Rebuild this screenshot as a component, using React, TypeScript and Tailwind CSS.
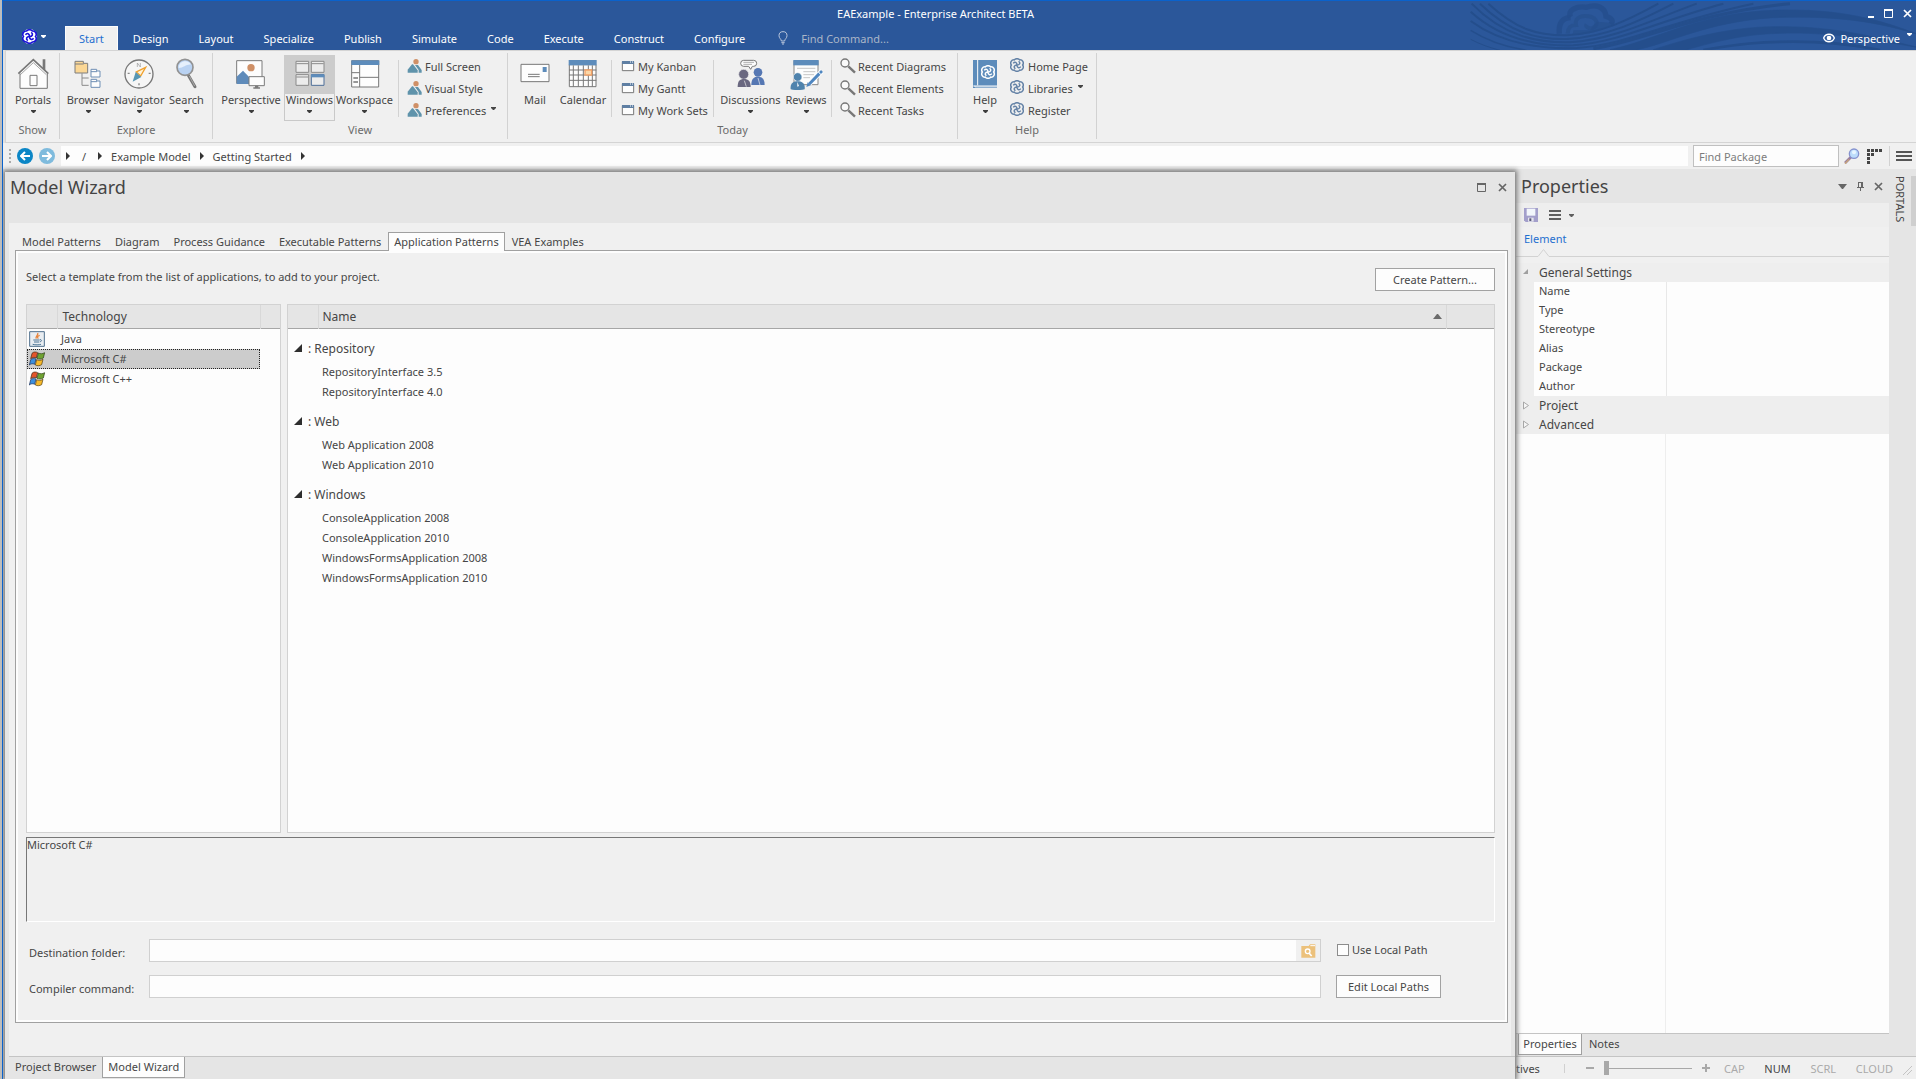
import React from "react";
import clsx from "clsx";

type IconProps = { className?: string };

/* ---------- icons ---------- */

const Caret = ({ className }: IconProps) => (
  <svg viewBox="0 0 5 3" className={clsx("w-[5px] h-[3px]", className)}>
    <path d="M0 0h5v1L3 3H2L0 1z" fill="currentColor" />
  </svg>
);

const Swirl = ({ className }: IconProps) => (
  <svg viewBox="0 0 26 26" className={className} fill="none" stroke="currentColor" strokeWidth="2.800">
    <path d="M8 3.500a6 5 0 0 1 10 0a6 6 0 0 1 5.500 9.500a6 6 0 0 1-5.500 9.500a6 5 0 0 1-10 0a6 6 0 0 1-5.500-9.500a6 6 0 0 1 5.500-9.500z" />
    <path d="M6 10c3-4 7-2 7 3c0 5 4 7 7 3M16 6c4 3 2 7-3 7c-5 0-7 4-3 7" />
  </svg>
);

const HouseIcon = () => (
  <svg viewBox="0 0 96 96" className="w-8 h-8">
    <path d="M9 45L48 10l39 35v47H9z" fill="#fdfdfd" />
    <path d="M77 4h8v36l-8-8z" fill="#777" />
    <path d="M9 46v45h82V46" fill="none" stroke="#777" strokeWidth="3" />
    <path d="M4 47L49 5l45 42" fill="none" stroke="#777" strokeWidth="5" />
    <path d="M10 50L49 14l39 36" fill="none" stroke="#777" strokeWidth="2" />
    <path d="M39 52h21v31H39z" fill="none" stroke="#777" strokeWidth="3" />
  </svg>
);

const BrowserIcon = () => (
  <svg viewBox="0 0 96 96" className="w-8 h-8">
    <path d="M30 46v36h20M30 60h20" fill="none" stroke="#8a8a8a" strokeWidth="3" />
    <path d="M9 10h25v6h13v29H9z" fill="#fbd795" stroke="#7d7d7d" strokeWidth="3" />
    <path d="M9 18h26" stroke="#7d7d7d" strokeWidth="3" />
    <path d="M57 34h17v5h10v18H57zM57 64h17v5h10v19H57z" fill="#fdfdfd" stroke="#6f8fb5" strokeWidth="3" />
    <path d="M57 41h18M57 71h18" stroke="#6f8fb5" strokeWidth="3" />
  </svg>
);

const CompassIcon = () => (
  <svg viewBox="0 0 96 96" className="w-8 h-8">
    <circle cx="48" cy="48" r="42" fill="#f6f6f6" stroke="#777" strokeWidth="4" />
    <path d="M43 27V15l9 12V15" fill="none" stroke="#999" strokeWidth="2" />
    <path d="M48 76v6M14 46h6M77 46h6" stroke="#888" strokeWidth="4" />
    <path d="M68 28L40 42l13 12z" fill="#fff3d8" stroke="#f0a02c" strokeWidth="4" />
    <path d="M38 42l17 15-26 14z" fill="#5897b4" />
  </svg>
);

const SearchIcon = () => (
  <svg viewBox="0 0 96 96" className="w-8 h-8">
    <path d="M52 52l20 34" stroke="#777" strokeWidth="9" strokeLinecap="round" />
    <path d="M55 54l16 30" stroke="#aaa" strokeWidth="3" />
    <circle cx="42" cy="28" r="24" fill="#b9d2f2" stroke="#929292" strokeWidth="5" />
    <path d="M23 30c0-14 10-20 20-20c8 0 14 4 17 10c-14-2-22 10-37 10z" fill="#e6f0fc" />
  </svg>
);

const PerspectiveIcon = () => (
  <svg viewBox="0 0 96 96" className="w-8 h-8">
    <path d="M5 8h76v68H5z" fill="#fdfdfd" stroke="#7b7b7b" strokeWidth="3" />
    <circle cx="48" cy="29" r="11" fill="#cf9067" />
    <path d="M5 56l19-18 19 20v20H5z" fill="#5f8bba" />
    <path d="M42 56h46v27H42z" fill="#fdfdfd" stroke="#7b7b7b" strokeWidth="3" />
    <path d="M60 83h10v5h5v4H55v-4h5z" fill="#7b7b7b" />
  </svg>
);

const WindowsIcon = () => (
  <svg viewBox="0 0 96 96" className="w-8 h-8">
    <path d="M6 10h38v33H6zM52 10h38v33H52zM6 50h38v32H6z" fill="#ececec" stroke="#8a8a8a" strokeWidth="3" />
    <path d="M7 17h36M53 17h36M7 57h36" stroke="#8a8a8a" strokeWidth="3" />
    <path d="M52 50h38v32H52z" fill="#ececec" stroke="#4f6f99" strokeWidth="3" />
    <path d="M51 49h40v9H51z" fill="#5d8cbb" />
  </svg>
);

const WorkspaceIcon = () => (
  <svg viewBox="0 0 96 96" className="w-8 h-8">
    <path d="M8 8h81v79H8z" fill="#fdfdfd" stroke="#777" strokeWidth="3" />
    <path d="M7 7h84v14H7z" fill="#5d8cbb" />
    <path d="M32 21v66M32 58h57M8 44h24" stroke="#777" strokeWidth="3" />
    <path d="M13 60h14M13 72h14" stroke="#777" strokeWidth="4" />
  </svg>
);

const MailIcon = () => (
  <svg viewBox="0 0 96 96" className="w-8 h-8">
    <path d="M6 19h84v52H6z" fill="#fdfdfd" stroke="#777" strokeWidth="3" />
    <path d="M71 27h12v15H71z" fill="#5d8cbb" />
    <path d="M27 49h35M27 56h35" stroke="#777" strokeWidth="3" />
  </svg>
);

const CalendarIcon = () => (
  <svg viewBox="0 0 96 96" className="w-8 h-8">
    <path d="M7 20h80v66H7z" fill="#fdfdfd" stroke="#777" strokeWidth="3" />
    <path d="M5 6h84v16H5z" fill="#5d8cbb" />
    <path d="M19 22v64M34 22v64M49 22v64M64 22v64M76 22v64M6 36h82M6 51h82M6 67h82" stroke="#777" strokeWidth="3" />
    <path d="M54 36h20v15H54z" fill="#fad7a8" stroke="#f2a268" strokeWidth="4" />
  </svg>
);

const DiscussionsIcon = () => (
  <svg viewBox="0 0 96 96" className="w-8 h-8">
    <path d="M26 7h30q9 0 9 9t-9 9h-4l-5 9-6-9H26q-9 0-9-9t9-9z" fill="#fdfdfd" stroke="#777" strokeWidth="3" />
    <path d="M25 13h32M25 19h26" stroke="#888" strokeWidth="2" />
    <circle cx="69" cy="43" r="13" fill="#5577b3" />
    <path d="M49 81c0-20 8-25 20-25s20 6 20 25z" fill="#5577b3" />
    <circle cx="26" cy="49" r="15" fill="#6a6880" stroke="#f0f0f0" strokeWidth="2" />
    <path d="M8 87c0-18 6-24 19-24s20 6 20 24z" fill="#6a6880" />
    <path d="M28 68l6 18M69 60l6 21" stroke="#f0f0f0" strokeWidth="2" />
  </svg>
);

const ReviewsIcon = () => (
  <svg viewBox="0 0 108 96" className="w-9 h-8">
    <path d="M18 8h72v72H18z" fill="#fdfdfd" stroke="#888" strokeWidth="3" />
    <path d="M16 6h76v16H16z" fill="#5d8cbb" />
    <path d="M27 31h55M46 41h36M46 50h32M46 59h20" stroke="#aaa" strokeWidth="2" />
    <circle cx="29" cy="57" r="13" fill="#4f83ad" stroke="#fdfdfd" strokeWidth="2" />
    <path d="M8 94c-2-18 8-24 21-24s23 6 21 24c-12 3-31 3-42 0z" fill="#4f83ad" />
    <path d="M28 72l5 12-5 2z" fill="#fff" />
    <path d="M64 78l30-31M94 47l8-8" stroke="#fdfdfd" strokeWidth="14" />
    <path d="M64 78l30-31" stroke="#4f86c0" strokeWidth="9" />
    <path d="M96 45l6-6" stroke="#4f86c0" strokeWidth="8" />
    <path d="M59 73l9 9-13 5z" fill="#4f86c0" />
  </svg>
);

const HelpIcon = () => (
  <div className="relative w-6 h-8">
    <svg viewBox="0 0 72 96" className="w-6 h-8">
      <path d="M0 6h72v84H0z" fill="#5d8cbb" />
      <path d="M14 6v76M4 84h68" stroke="#fdfdfd" strokeWidth="3" fill="none" />
      <path d="M0 84h6v3h66" stroke="#fdfdfd" strokeWidth="2" fill="none" />
    </svg>
    <Swirl className="absolute left-2 top-[7px] size-[14px] text-white" />
  </div>
);

const SceneIcon = () => (
  <svg viewBox="0 0 48 48" className="w-4 h-4">
    <circle cx="27" cy="11" r="8" fill="#cf9067" />
    <path d="M2 44V35L15 19h3l14 18v7z" fill="#5f93ab" />
    <path d="M24 21h9l11 15v8h-9v-8z" fill="#5f93ab" />
  </svg>
);

const FrameIcon = () => (
  <svg viewBox="0 0 48 48" className="w-4 h-4">
    <path d="M7 11h34v27H7z" fill="#fdfdfd" stroke="#777" strokeWidth="3" />
    <path d="M6 9h36v9H6z" fill="#5f7fa3" />
    <path d="M30 12h3M36 12h3" stroke="#fff" strokeWidth="3" />
  </svg>
);

const LensIcon = () => (
  <svg viewBox="0 0 48 48" className="w-4 h-4">
    <circle cx="15" cy="15" r="12" fill="#fafafa" stroke="#777" strokeWidth="4" />
    <path d="M25 25l20 19" stroke="#777" strokeWidth="7" />
  </svg>
);

const SmallSwirl = () => <Swirl className="size-[14px] text-[#6482a6]" />;

const FlagIcon = () => (
  <svg viewBox="0 0 48 48" className="w-4 h-4">
    <path d="M9 7c5-5 11-5 17-2l-4 16c-6-3-11-2-17 2z" fill="#e2552b" stroke="#3c2414" strokeWidth="2" />
    <path d="M28 6c6 3 12 3 19-1l-4 16c-7 4-13 4-19 1z" fill="#6fa332" stroke="#2b3b12" strokeWidth="2" />
    <path d="M5 26c5-4 10-5 16-2l-4 16c-6-3-11-2-16 2z" fill="#3d8fdd" stroke="#1b2e55" strokeWidth="2" />
    <path d="M23 26c6 3 12 3 19-1l-4 16c-7 4-13 4-19 1z" fill="#f6b92b" stroke="#4d3a10" strokeWidth="2" />
  </svg>
);

const JavaIcon = () => (
  <svg viewBox="0 0 48 48" className="w-4 h-4">
    <path d="M2 2h44v44H2z" fill="#e9edf1" stroke="#4f6f8c" strokeWidth="3" />
    <path d="M26 6c4 7-9 9-4 17M32 13c-8 3-8 5-4 10" fill="none" stroke="#e8833a" strokeWidth="4" />
    <path d="M13 27h19M15 33h16M11 40c8 2 19 2 25 0M33 26c6-1 6 6 0 6" fill="none" stroke="#4d7595" strokeWidth="3" />
  </svg>
);

const CloseIcon = ({ className }: IconProps) => (
  <svg viewBox="0 0 9 9" className={clsx("size-[9px]", className)}>
    <path d="M1 1l7 7M8 1L1 8" stroke="currentColor" strokeWidth="1.700" />
  </svg>
);

const MaxIcon = ({ className }: IconProps) => (
  <svg viewBox="0 0 9 9" className={clsx("size-[9px]", className)}>
    <path d="M.5 1h8v7.500h-8z" fill="none" stroke="currentColor" />
    <path d="M0 1h9" stroke="currentColor" strokeWidth="2" />
  </svg>
);

const MenuIcon = ({ className }: IconProps) => (
  <svg viewBox="0 0 16 10" preserveAspectRatio="none" className={className}>
    <path d="M0 0h16v2H0zM0 4h16v2H0zM0 8h16v2H0z" fill="currentColor" />
  </svg>
);

const HeaderWaves = () => (
  <svg viewBox="0 0 1428 147" className="absolute right-0 top-0 w-[476px] h-[49px]" fill="none" stroke="#244e8c">
    <path d="M145 8C230 85 290 104 380 103C480 98 560 60 655 8" strokeWidth="6" />
    <path d="M120 8C210 95 290 116 380 114C500 108 600 60 700 8" strokeWidth="6" />
    <path d="M95 8C190 105 290 126 390 124C520 117 640 55 770 8" strokeWidth="6" />
    <path d="M92 32C180 112 290 136 400 133C540 124 670 55 850 8" strokeWidth="6" />
    <path d="M92 60C180 125 290 145 410 141C560 132 690 60 940 8" strokeWidth="6" />
    <path d="M92 88C150 125 210 140 260 148" strokeWidth="4" />
    <path d="M92 115C120 130 150 140 180 148" strokeWidth="3" />
    <path d="M460 143C600 125 760 35 1050 8" strokeWidth="9" />
    <path d="M510 146C640 120 780 35 1000 28C1200 20 1330 60 1428 98C1320 66 1200 42 1000 50C800 62 680 130 590 146z" fill="#244e8c" strokeWidth="2" />
    <path d="M640 146C780 100 900 76 1020 77C1180 76 1320 110 1428 138C1300 118 1180 92 1020 97C900 99 800 130 740 146z" fill="#244e8c" strokeWidth="2" />
    <path d="M790 147C900 128 960 122 1060 122C1180 122 1260 135 1320 147" strokeWidth="8" />
    <path d="M358 98C355 66 368 50 392 50" strokeWidth="16" opacity=".8" />
    <path d="M392 48C380 28 410 14 440 19C468 8 496 18 498 46C515 52 522 60 512 70" strokeWidth="16" opacity=".8" />
    <path d="M383 98C384 78 392 72 408 72C402 48 430 40 455 48C475 58 474 74 456 82C444 84 436 76 440 70" strokeWidth="12" opacity=".6" />
    <path d="M398 102C470 100 500 80 522 66L470 62L450 88H400z" fill="#244e8c" stroke="none" opacity=".6" />
  </svg>
);

/* ---------- ribbon ---------- */

type BigProps = {
  label: string;
  icon: React.ReactNode;
  width: string;
  arrow?: boolean;
  active?: boolean;
};

const BigButton = ({ label, icon, width, arrow = true, active }: BigProps) => (
  <button
    className={clsx(
      "h-[66px] flex flex-col items-center shrink-0 whitespace-nowrap",
      width,
      active && "shadow-[inset_0_0_0_1px_#c9c9c9]"
    )}
  >
    <span className={clsx("h-[39px] w-full pt-[3px] flex justify-center", active && "bg-[#cccccc]")}>
      {icon}
    </span>
    <span className="leading-[11px]">{label}</span>
    {arrow && <Caret className="mt-[5px] text-[#3c3c3c]" />}
  </button>
);

type SmallProps = { items: string[]; icon: React.ReactNode; arrowOn?: string; className?: string };

const SmallList = ({ items, icon, arrowOn, className }: SmallProps) => (
  <div className={clsx("flex flex-col shrink-0", className)}>
    {items.map((item) => (
      <button key={item} className="h-[22px] flex items-center whitespace-nowrap">
        <span className="w-[18px] h-4">{icon}</span>
        {item}
        {item === arrowOn && <Caret className="ml-[5px] mb-[3px]" />}
      </button>
    ))}
  </div>
);

const Divider = () => <div className="w-px h-[57px] mt-[5px] bg-[#d2d2d2] shrink-0" />;

type GroupProps = { title: string; width: string; pad?: string; children: React.ReactNode };

const Group = ({ title, width, pad, children }: GroupProps) => (
  <section className={clsx("border-r border-[#d2d2d2] pt-[2px] shrink-0", width)}>
    <div className={clsx("flex", pad)}>{children}</div>
    <h2 className="text-center leading-[18px] text-[#6a6a6a]">{title}</h2>
  </section>
);

const Ribbon = () => (
  <div className="flex bg-[#f0f0f0] border border-[#d4d4d4] border-r-0 pt-[2px] pb-[3px] h-[93px] ml-[2px] overflow-hidden">
    <Group title="Show" width="w-[54px]">
      <BigButton label="Portals" icon={<HouseIcon />} width="w-[54px]" />
    </Group>
    <Group title="Explore" width="w-[153px]" pad="pl-1">
      <BigButton label="Browser" icon={<BrowserIcon />} width="w-12" />
      <BigButton label="Navigator" icon={<CompassIcon />} width="w-[54px]" />
      <BigButton label="Search" icon={<SearchIcon />} width="w-[41px]" />
    </Group>
    <Group title="View" width="w-[295px]" pad="pl-[5px]">
      <BigButton label="Perspective" icon={<PerspectiveIcon />} width="w-[66px]" />
      <BigButton label="Windows" icon={<WindowsIcon />} width="w-[51px]" active />
      <BigButton label="Workspace" icon={<WorkspaceIcon />} width="w-[59px]" />
      <div className="w-1" />
      <Divider />
      <SmallList
        className="pl-2"
        items={["Full Screen", "Visual Style", "Preferences"]}
        icon={<SceneIcon />}
        arrowOn="Preferences"
      />
    </Group>
    <Group title="Today" width="w-[450px]" pad="pl-[5px]">
      <BigButton label="Mail" icon={<MailIcon />} width="w-11" arrow={false} />
      <BigButton label="Calendar" icon={<CalendarIcon />} width="w-[52px]" arrow={false} />
      <div className="w-[2px]" />
      <Divider />
      <SmallList className="pl-2 w-[101px]" items={["My Kanban", "My Gantt", "My Work Sets"]} icon={<FrameIcon />} />
      <Divider />
      <div className="w-[6px]" />
      <BigButton label="Discussions" icon={<DiscussionsIcon />} width="w-[61px]" />
      <BigButton label="Reviews" icon={<ReviewsIcon />} width="w-[50px]" />
      <Divider />
      <SmallList className="pl-2" items={["Recent Diagrams", "Recent Elements", "Recent Tasks"]} icon={<LensIcon />} />
    </Group>
    <Group title="Help" width="w-[139px]" pad="pl-[7px]">
      <BigButton label="Help" icon={<HelpIcon />} width="w-10" />
      <SmallList
        className="pl-[5px]"
        items={["Home Page", "Libraries", "Register"]}
        icon={<SmallSwirl />}
        arrowOn="Libraries"
      />
    </Group>
  </div>
);

/* ---------- header ---------- */

const menuTabs = ["Design", "Layout", "Specialize", "Publish", "Simulate", "Code", "Execute", "Construct", "Configure"];

const Header = () => (
  <header className="relative bg-[#2b579a] text-white h-[49px] overflow-hidden shrink-0">
    <HeaderWaves />
    <div className="relative h-[25px] flex items-center">
      <h1 className="flex-1 text-center">EAExample - Enterprise Architect BETA</h1>
      <div className="flex items-center gap-[10px] pr-1">
        <button aria-label="Minimize" className="w-[6px] h-[9px] border-b-2 border-white" />
        <button aria-label="Maximize">
          <MaxIcon />
        </button>
        <button aria-label="Close">
          <CloseIcon />
        </button>
      </div>
    </div>
    <nav className="relative h-6 flex items-center">
      <button aria-label="Application menu" className="flex items-center gap-1 pl-[19px] w-[62px] pb-[3px]">
        <span className="size-[15px] rounded-full bg-white text-[#1a12d8]">
          <Swirl className="size-[15px]" />
        </span>
        <Caret />
      </button>
      <button className="h-6 px-[13px] bg-[#f0f0f0] border border-b-0 border-[#fdfdfd] text-[#1f6fcf]">
        Start
      </button>
      {menuTabs.map((tab) => (
        <button key={tab} className="h-6 px-[15px]">
          {tab}
        </button>
      ))}
      <label className="flex items-center ml-[18px] flex-1">
        <svg viewBox="0 0 30 42" className="w-[10px] h-[14px]" fill="none" stroke="#b9c6dc" strokeWidth="3">
          <path d="M10 30c0-6-7-8-7-16a12 12 0 0 1 24 0c0 8-7 10-7 16zM10 35h10M12 39h6" />
        </svg>
        <input
          type="text"
          aria-label="Find Command"
          placeholder="Find Command..."
          className="ml-[13px] w-40 bg-transparent outline-none placeholder:text-[#aab6c8]"
        />
      </label>
      <button className="flex items-center h-6 pr-1">
        <svg viewBox="0 0 36 30" className="w-3 h-[10px]" fill="none" stroke="#fff" strokeWidth="4">
          <path d="M2 15C8 0 28 0 34 15C28 30 8 30 2 15z" />
          <circle cx="18" cy="15" r="5" fill="#fff" />
        </svg>
        <span className="ml-[5px]">Perspective</span>
        <Caret className="ml-[7px] mb-2" />
      </button>
    </nav>
  </header>
);

const Crumb = () => (
  <svg viewBox="0 0 4 8" className="w-1 h-2">
    <path d="M0 0l4 4-4 4z" fill="#333" />
  </svg>
);

const Arrow = ({ back, className }: { back?: boolean; className: string }) => (
  <button aria-label={back ? "Back" : "Forward"} className={clsx("size-4 rounded-full flex items-center justify-center", className)}>
    <svg viewBox="0 0 10 10" className="size-[10px]" fill="none" stroke="#fff" strokeWidth="2">
      <path d={back ? "M10 5H1M5 1L1 5l4 4" : "M0 5h9M5 1l4 4-4 4"} />
    </svg>
  </button>
);

const Breadcrumbs = () => (
  <div className="flex items-center h-[26px] bg-[#f0f0f0] pl-[6px] shrink-0">
    <div className="h-[14px] border-l-2 border-dotted border-[#aaa]" />
    <div className="flex gap-[6px] pl-[6px]">
      <Arrow back className="bg-[#0b86c6]" />
      <Arrow className="bg-[#7fbbdd]" />
    </div>
    <nav className="flex-1 h-5 ml-[6px] bg-[#fdfdfd] flex items-center gap-[9px] pl-[5px]">
      <Crumb />
      <a href="#root" className="px-[3px]">
        /
      </a>
      <Crumb />
      <a href="#example">Example Model</a>
      <Crumb />
      <a href="#started">Getting Started</a>
      <Crumb />
    </nav>
    <input
      type="text"
      aria-label="Find Package"
      placeholder="Find Package"
      className="ml-[5px] w-[146px] h-[22px] bg-[#fdfdfd] border border-[#c0c0c0] px-[5px] outline-none placeholder:text-[#7c7c7c]"
    />
    <button aria-label="Find" className="ml-[5px]">
      <svg viewBox="0 0 48 48" className="w-4 h-4">
        <path d="M3 45l18-18" stroke="#9a7fa0" strokeWidth="8" />
        <path d="M3 47l12-13" stroke="#c9a778" strokeWidth="4" />
        <circle cx="30" cy="17" r="14" fill="#bcdcfb" stroke="#8592cf" strokeWidth="4" />
        <circle cx="30" cy="13" r="6" fill="#e8f5ff" />
      </svg>
    </button>
    <button aria-label="Layout" className="ml-[7px]">
      <svg viewBox="0 0 15 15" className="size-[15px]" fill="#444">
        <path d="M0 0h3v3H0zM4 0h3v3H4zM8 0h3v3H8zM12 0h3v3h-3zM0 4h3v3H0zM4 4h3v3H4zM0 8h3v3H0zM0 12h3v3H0z" />
      </svg>
    </button>
    <div className="w-px h-5 bg-[#d2d2d2] ml-[7px] mr-[6px]" />
    <button aria-label="Menu" className="mr-1">
      <MenuIcon className="w-4 h-[10px] text-[#555]" />
    </button>
  </div>
);

/* ---------- wizard ---------- */

const wizardTabs = [
  "Model Patterns",
  "Diagram",
  "Process Guidance",
  "Executable Patterns",
  "Application Patterns",
  "VEA Examples",
];

const technologies = [
  { name: "Java", icon: <JavaIcon /> },
  { name: "Microsoft C#", icon: <FlagIcon />, selected: true },
  { name: "Microsoft C++", icon: <FlagIcon /> },
];

const patterns = [
  { group: "Repository", items: ["RepositoryInterface 3.5", "RepositoryInterface 4.0"] },
  { group: "Web", items: ["Web Application 2008", "Web Application 2010"] },
  {
    group: "Windows",
    items: [
      "ConsoleApplication 2008",
      "ConsoleApplication 2010",
      "WindowsFormsApplication 2008",
      "WindowsFormsApplication 2010",
    ],
  },
];

const TechnologyList = () => (
  <div className="w-[255px] shrink-0 bg-[#fdfdfd] border border-[#d2d2d2]">
    <table className="w-full table-fixed">
      <colgroup>
        <col className="w-[30px]" />
        <col className="w-[203px]" />
        <col />
      </colgroup>
      <thead>
        <tr className="h-[23px] bg-[#e5e5e5] border-b border-[#a6a6a6] text-left">
          <th className="border-r border-[#d8d8d8]" />
          <th className="border-r border-[#d8d8d8] pl-[5px] font-normal text-[12px]">Technology</th>
          <th />
        </tr>
      </thead>
      <tbody>
        {technologies.map((tech) => (
          <tr key={tech.name} className="h-5">
            <td colSpan={2} className="p-0">
              <div
                className={clsx(
                  "flex items-center border pl-px h-5",
                  tech.selected ? "bg-[#cccccc] border-dotted border-[#222]" : "border-transparent"
                )}
              >
                {tech.icon}
                <span className="pl-4">{tech.name}</span>
              </div>
            </td>
            <td />
          </tr>
        ))}
      </tbody>
    </table>
  </div>
);

const PatternList = () => (
  <div className="flex-1 bg-[#fdfdfd] border border-[#d2d2d2]">
    <table className="w-full table-fixed">
      <colgroup>
        <col className="w-[30px]" />
        <col />
        <col className="w-12" />
      </colgroup>
      <thead>
        <tr className="h-[23px] bg-[#e5e5e5] border-b border-[#a6a6a6] text-left">
          <th className="border-r border-[#d8d8d8]" />
          <th className="border-r border-[#d8d8d8] px-[4px] font-normal text-[12px]">
            <div className="flex items-center justify-between">
              Name
              <svg viewBox="0 0 9 5" className="w-[9px] h-[5px]">
                <path d="M0 5l4-5h1l4 5z" fill="#6b6b6b" />
              </svg>
            </div>
          </th>
          <th />
        </tr>
      </thead>
      {patterns.map(({ group, items }) => (
        <tbody key={group}>
          <tr className="h-[33px]">
            <th colSpan={3} className="font-normal text-left text-[12px] pt-[7px] pb-0 pl-[6px]">
              <div className="flex items-center">
                <svg viewBox="0 0 8 8" className="size-2 mr-[6px]">
                  <path d="M8 0v8H0z" fill="#2e2e2e" />
                </svg>
                : {group}
              </div>
            </th>
          </tr>
          {items.map((item) => (
            <tr key={item} className="h-5">
              <td colSpan={3} className="pl-[34px] py-0">
                {item}
              </td>
            </tr>
          ))}
        </tbody>
      ))}
    </table>
  </div>
);

const field = "h-[23px] bg-[#fdfdfd] border border-[#d0d0d0]";
const pushButton = "h-[23px] bg-[#fdfdfd] border border-[#a2a2a2] leading-[21px]";

const ApplicationPatterns = () => (
  <div className="flex-1 flex flex-col border border-[#a0a0a0] shadow-[inset_0_0_0_2px_#fdfdfd] pt-[17px] pl-[10px] pr-3 pb-6">
    <div className="flex items-start justify-between">
      <p className="leading-[18px]">Select a template from the list of applications, to add to your project.</p>
      <button className={clsx(pushButton, "w-[120px]")}>Create Pattern...</button>
    </div>
    <div className="flex-1 flex gap-[6px] mt-[13px]">
      <TechnologyList />
      <PatternList />
    </div>
    <div className="mt-1 h-[85px] border border-l-[#777] border-t-[#777] border-r-white border-b-white leading-[14px]">
      Microsoft C#
    </div>
    <div className="flex flex-col gap-[13px] mt-[17px]">
      <div className="flex">
        <label htmlFor="destination" className="w-[123px] pl-[3px] pt-[6px]">
          Destination <u className="underline-offset-2">f</u>older:
        </label>
        <div className={clsx(field, "flex-1 flex")}>
          <input id="destination" type="text" className="flex-1 px-1 outline-none" />
          <button aria-label="Browse" className="w-6 bg-[#f0f0f0] flex items-center justify-center">
            <svg viewBox="0 0 45 42" className="w-[15px] h-[14px]">
              <path d="M1 6h22l4-5h16v40H1z" fill="#ecc17b" />
              <path d="M28 5h14" stroke="#fff" strokeWidth="3" />
              <circle cx="20" cy="22" r="7" fill="none" stroke="#fff" strokeWidth="4" />
              <path d="M24 27l8 9" stroke="#fff" strokeWidth="5" />
            </svg>
          </button>
        </div>
        <label className="ml-4 w-[158px] h-[21px] flex items-center">
          <input type="checkbox" className="appearance-none size-3 bg-[#fdfdfd] border border-[#8c8c8c] mr-[3px]" />
          Use Local Path
        </label>
      </div>
      <div className="flex">
        <label htmlFor="compiler" className="w-[123px] pl-[3px] pt-[6px]">
          Compiler command:
        </label>
        <input id="compiler" type="text" className={clsx(field, "flex-1 px-1 outline-none")} />
        <div className="ml-[15px] w-[159px]">
          <button className={clsx(pushButton, "w-[105px]")}>Edit Local Paths</button>
        </div>
      </div>
    </div>
  </div>
);

const ModelWizard = () => (
  <main className="relative z-10 flex-1 min-w-0 flex flex-col bg-[#e5e5e5] ml-[2px] mr-px shadow-[0_0_5px_2px_#777]">
    <div className="h-[51px] flex justify-between items-start pl-[5px] pr-2">
      <h2 className="text-[18px] leading-[31px] text-[#444]">Model Wizard</h2>
      <div className="flex gap-3 pt-[11px] text-[#666]">
        <button aria-label="Maximize panel">
          <MaxIcon />
        </button>
        <button aria-label="Close panel">
          <CloseIcon />
        </button>
      </div>
    </div>
    <div className="flex-1 flex flex-col mx-1 px-[6px] pr-[3px] pt-[9px] pb-[33px] bg-[#f0f0f0]">
      <div className="flex h-[18px]">
        {wizardTabs.map((tab) => (
          <button
            key={tab}
            className={clsx(
              "h-[19px] pb-px",
              tab === "Application Patterns"
                ? "relative px-[5px] bg-[#fdfdfd] border border-b-0 border-[#a0a0a0]"
                : "px-[7px]"
            )}
          >
            {tab}
          </button>
        ))}
      </div>
      <ApplicationPatterns />
    </div>
    <div className="h-[23px] ml-1 flex border-t border-[#c4c4c4]">
      <button className="h-[21px] pb-[2px] px-[6px]">Project Browser</button>
      <button className="h-[21px] pb-px px-[5px] bg-[#fdfdfd] border border-t-0 border-[#a0a0a0]">Model Wizard</button>
    </div>
  </main>
);

/* ---------- properties ---------- */

const generalRows = ["Name", "Type", "Stereotype", "Alias", "Package", "Author"];

const Properties = () => (
  <aside className="w-[373px] flex flex-col bg-[#e5e5e5]">
    <div className="h-[34px] flex items-center justify-between pl-[5px] pr-[6px]">
      <h2 className="text-[18px] text-[#444]">Properties</h2>
      <div className="flex items-center gap-[10px] text-[#666]">
        <button aria-label="Options">
          <svg viewBox="0 0 9 5" className="w-[9px] h-[5px]">
            <path d="M0 0h9L5 5H4z" fill="currentColor" />
          </svg>
        </button>
        <button aria-label="Pin">
          <svg viewBox="0 0 7 9" className="w-[7px] h-[9px]" fill="none" stroke="currentColor">
            <path d="M1.500 0v5M1 .5h4M0 5.500h7M3.500 6v3" />
            <path d="M5 0v5" strokeWidth="2" />
          </svg>
        </button>
        <button aria-label="Close properties">
          <CloseIcon />
        </button>
      </div>
    </div>
    <div className="h-6 flex items-center gap-[11px] pl-2 bg-[#eeeeee]">
      <button aria-label="Save">
        <svg viewBox="0 0 42 42" className="size-[14px]">
          <path d="M0 0h42v42H5L0 37z" fill="#a39fcb" />
          <path d="M8 2h26v21H8z" fill="#f2f6fb" />
          <path d="M12 29h17v12H12z" fill="#e4e4ee" />
          <path d="M16 31h6v8h-6z" fill="#5a5a78" />
        </svg>
      </button>
      <button aria-label="View menu" className="flex items-center gap-2 text-[#5f5f5f]">
        <MenuIcon className="w-3 h-[10px]" />
        <Caret />
      </button>
    </div>
    <div className="h-9 bg-[#f0f0f0]">
      <a href="#element" className="block pl-2 leading-6 text-[#1f6fcf]">
        Element
      </a>
      <div className="flex items-end h-[6px]">
        <div className="w-[22px] border-b border-[#d2d2d2]" />
        <svg viewBox="0 0 11 8" className="w-[11px] h-2" fill="none" stroke="#d2d2d2">
          <path d="M0 7.500L5.500 .5L11 7.500" />
        </svg>
        <div className="flex-1 border-b border-[#d2d2d2]" />
      </div>
    </div>
    <div className="flex-1 flex flex-col bg-[#fdfdfd]">
      <table className="w-full table-fixed">
        <colgroup>
          <col className="w-[18px]" />
          <col className="w-[132px]" />
          <col />
        </colgroup>
        <tbody>
          <tr className="h-[19px] bg-[#eeeeee]">
            <td className="pt-0 pb-[2px] pl-[7px]">
              <svg viewBox="0 0 5 5" className="size-[5px]">
                <path d="M5 0v5H0z" fill="#a0a0a0" />
              </svg>
            </td>
            <th colSpan={2} className="p-0 pb-px pl-[5px] text-left font-normal text-[12px]">
              General Settings
            </th>
          </tr>
          {generalRows.map((row) => (
            <tr key={row} className="h-[19px]">
              <td className="bg-[#eeeeee]" />
              <th className="p-0 pb-[2px] pl-[5px] text-left font-normal border-r border-[#e8e8e8]">{row}</th>
              <td />
            </tr>
          ))}
          {["Project", "Advanced"].map((row) => (
            <tr key={row} className="h-[19px] bg-[#eeeeee]">
              <td className="pt-0 pb-px pl-[7px]">
                <svg viewBox="0 0 6 9" className="w-[6px] h-[9px]" fill="#f5f5f5" stroke="#a8a8a8">
                  <path d="M.5 1l5 3.500L.5 8z" />
                </svg>
              </td>
              <th colSpan={2} className="p-0 pb-px pl-[5px] text-left font-normal text-[12px]">
                {row}
              </th>
            </tr>
          ))}
        </tbody>
      </table>
      <div className="flex-1 w-[150px] border-r border-[#eeeeee]" />
    </div>
    <div className="h-[23px] flex border-t border-[#c4c4c4]">
      <button className="h-[21px] w-[64px] ml-[2px] pb-px bg-[#fdfdfd] border border-t-0 border-[#a0a0a0]">Properties</button>
      <button className="h-[21px] pb-[2px] px-[7px]">Notes</button>
    </div>
  </aside>
);

const StatusBar = () => (
  <footer className="h-[23px] flex items-center border-t border-[#c4c4c4] bg-[#f0f0f0] text-[#aaaaaa] shrink-0">
    <span className="w-12 text-[#464646]">tives</span>
    <div className="w-px h-[9px] bg-[#d0d0d0]" />
    <button aria-label="Zoom out" className="ml-[21px] w-2 h-[2px] bg-[#a8a8a8]" />
    <input
      type="range"
      aria-label="Zoom"
      defaultValue={0}
      className="ml-[10px] w-[88px] h-[14px] appearance-none bg-[linear-gradient(#a8a8a8,#a8a8a8)] bg-[length:100%_1px] bg-center bg-no-repeat [&::-webkit-slider-thumb]:appearance-none [&::-webkit-slider-thumb]:w-[5px] [&::-webkit-slider-thumb]:h-[14px] [&::-webkit-slider-thumb]:bg-[#a8a8a8]"
    />
    <button aria-label="Zoom in" className="ml-[10px]">
      <svg viewBox="0 0 8 8" className="size-2">
        <path d="M4 0v8M0 4h8" stroke="#a8a8a8" strokeWidth="2" />
      </svg>
    </button>
    <div className="flex-1 flex justify-between pl-[14px] pr-[10px]">
      <span>CAP</span>
      <span className="text-[#464646]">NUM</span>
      <span>SCRL</span>
      <span>CLOUD</span>
    </div>
    <svg viewBox="0 0 9 9" className="size-[9px] mr-1 self-end mb-1" stroke="#c4c4c4">
      <path d="M0 9l9-9M4 9l5-5" />
    </svg>
  </footer>
);

const App = () => {
  return (
    <div className="h-screen pl-[2px] bg-[#bdbdbd] font-['Noto_Sans',sans-serif] text-[11px] leading-[15px] text-[#464646]">
      <div className="h-full flex flex-col border-t border-l border-[#0a62cc] bg-[#e0e0e0] overflow-hidden">
        <Header />
        <Ribbon />
        <Breadcrumbs />
        <div className="flex-1 flex min-h-0 pt-[3px]">
          <ModelWizard />
          <div className="flex flex-col w-[400px] shrink-0 -mt-[3px]">
            <div className="flex-1 flex">
              <Properties />
              <div className="flex-1 bg-[#e5e5e5] pt-[7px] flex justify-between">
                <button className="[writing-mode:vertical-rl] h-[50px] w-[15px] ml-1 flex items-center">PORTALS</button>
                <div className="w-[5px] h-[50px] bg-[#cfcfcf]" />
              </div>
            </div>
            <StatusBar />
          </div>
        </div>
      </div>
    </div>
  );
};

export default App;
